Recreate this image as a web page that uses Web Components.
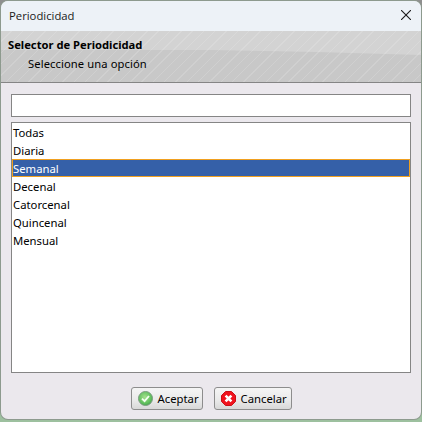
<!DOCTYPE html>
<html lang="es">
<head>
<meta charset="utf-8">
<title>Periodicidad</title>
<style>
  html, body { margin: 0; width: 422px; height: 422px; overflow: hidden; }
  body { background: linear-gradient(#8f8f8f 0, #8f8f8f 56px, #9dc09f 60px); font-family: "Noto Sans", Tahoma, sans-serif; }
</style>
</head>
<body>
<dialog-window>
  <title-bar slot="title">Periodicidad</title-bar>
  <dialog-header heading="Selector de Periodicidad" hint="Seleccione una opción"></dialog-header>
  <filter-input></filter-input>
  <option-list>
    <option-item>Todas</option-item>
    <option-item>Diaria</option-item>
    <option-item selected>Semanal</option-item>
    <option-item>Decenal</option-item>
    <option-item>Catorcenal</option-item>
    <option-item>Quincenal</option-item>
    <option-item>Mensual</option-item>
  </option-list>
  <button-bar>
    <dialog-button icon="ok" style="--w: 72px">Aceptar</dialog-button>
    <dialog-button icon="cancel" style="--w: 78px">Cancelar</dialog-button>
  </button-bar>
</dialog-window>

<script>
class DialogWindow extends HTMLElement {
  constructor() {
    super();
    this.attachShadow({ mode: 'open' }).innerHTML = `
      <style>
        :host {
          display: flex;
          flex-direction: column;
          box-sizing: border-box;
          width: 420px;
          height: 418px;
          margin: 1px 1px 0;
          background: #ebe8ed;
          border-radius: 7px;
          box-shadow: 0 0 0 1px #8d9a8e;
          overflow: hidden;
        }
      </style>
      <slot name="title"></slot>
      <slot></slot>
    `;
  }
}

class TitleBar extends HTMLElement {
  constructor() {
    super();
    this.attachShadow({ mode: 'open' }).innerHTML = `
      <style>
        :host {
          display: flex;
          align-items: center;
          justify-content: space-between;
          box-sizing: border-box;
          height: 30px;
          flex: none;
          padding: 0 10px 2px 8px;
          background: #edf2f7;
          font: 11.3px "Open Sans", "Noto Sans", sans-serif;
          color: #1a1a1a;
        }
        svg { display: block; }
      </style>
      <slot></slot>
      <svg width="10" height="10" viewBox="0 0 10 10" fill="none" stroke="#1a1a1a" stroke-width="1.1">
        <path d="M0 0 10 10M10 0 0 10"/>
      </svg>
    `;
  }
}

class DialogHeader extends HTMLElement {
  constructor() {
    super();
    this.attachShadow({ mode: 'open' }).innerHTML = `
      <style>
        :host {
          display: flex;
          flex-direction: column;
          position: relative;
          box-sizing: border-box;
          height: 52px;
          flex: none;
          padding: 6px 7px 0;
          background:
            repeating-linear-gradient(135deg, rgba(255,255,255,0) 0 7px, rgba(255,255,255,.14) 7px 8px),
            #d3d3d3;
          border-bottom: 1px solid #858585;
          font: 11.2px/16px "Noto Sans", sans-serif;
          color: #000;
        }
        :host::before {
          content: "";
          position: absolute;
          inset: 0;
          background:
            repeating-linear-gradient(135deg, rgba(255,255,255,0) 0 7px, rgba(255,255,255,.14) 7px 8px),
            #c8c8c8;
          clip-path: polygon(0 19px, 50% 19px, 75% 21px, 100% 24px, 100% 100%, 0 100%);
        }
        b, span { position: relative; white-space: nowrap; }
        span { margin: 3px 0 0 20px; letter-spacing: .1px; }
      </style>
      <b></b>
      <span></span>
    `;
  }
  connectedCallback() {
    this.shadowRoot.querySelector('b').textContent = this.getAttribute('heading');
    this.shadowRoot.querySelector('span').textContent = this.getAttribute('hint');
  }
}

class FilterInput extends HTMLElement {
  constructor() {
    super();
    this.attachShadow({ mode: 'open' }).innerHTML = `
      <style>
        :host {
          display: block;
          flex: none;
          margin: 11px 10px 0;
        }
        input {
          display: block;
          box-sizing: border-box;
          width: 100%;
          height: 23px;
          margin: 0;
          padding: 0 3px;
          background: #fff;
          border: 1px solid #858585;
          border-radius: 0;
          outline: none;
        }
      </style>
      <input type="text">
    `;
  }
}

class OptionList extends HTMLElement {
  constructor() {
    super();
    this.attachShadow({ mode: 'open' }).innerHTML = `
      <style>
        :host {
          display: block;
          box-sizing: border-box;
          flex: none;
          height: 251px;
          margin: 5px 10px 0;
          background: #fff;
          border: 1px solid #858585;
        }
      </style>
      <slot></slot>
    `;
  }
}

class OptionItem extends HTMLElement {
  constructor() {
    super();
    this.attachShadow({ mode: 'open' }).innerHTML = `
      <style>
        :host {
          display: block;
          box-sizing: border-box;
          height: 18px;
          padding: 1px 1px 0;
          font: 11.3px/18px "Noto Sans", sans-serif;
          color: #000;
          white-space: nowrap;
        }
        :host([selected]) {
          background: #3560a8;
          color: #fff;
          line-height: 16px;
          border: 1px solid #f0a020;
          padding: 1px 0 0;
        }
      </style>
      <slot></slot>
    `;
  }
}

class ButtonBar extends HTMLElement {
  constructor() {
    super();
    this.attachShadow({ mode: 'open' }).innerHTML = `
      <style>
        :host {
          display: flex;
          justify-content: center;
          gap: 11px;
          margin-top: 14px;
        }
      </style>
      <slot></slot>
    `;
  }
}

const ICONS = {
  ok: `<svg width="15" height="15" viewBox="0 0 15 15">
    <defs><radialGradient id="g" cx=".45" cy=".4" r=".65">
      <stop offset="0" stop-color="#a5e08e"/><stop offset=".7" stop-color="#5fbf5c"/><stop offset="1" stop-color="#3f9a4a"/>
    </radialGradient></defs>
    <circle cx="7.5" cy="7.5" r="7" fill="url(#g)" stroke="#7c9c80"/>
    <path d="M4 7.6 6.6 10.2 11 5" fill="none" stroke="#f4fff0" stroke-width="1.9"/>
  </svg>`,
  cancel: `<svg width="15" height="15" viewBox="0 0 15 15">
    <path d="M4.5.5h6l4 4v6l-4 4h-6l-4-4v-6z" fill="#f0141e" stroke="#c81018"/>
    <path d="M4.6 4.6 10.4 10.4M10.4 4.6 4.6 10.4" fill="none" stroke="#fff" stroke-width="2.6"/>
  </svg>`
};

class DialogButton extends HTMLElement {
  constructor() {
    super();
    this.attachShadow({ mode: 'open' }).innerHTML = `
      <style>
        :host {
          display: flex;
          align-items: center;
          gap: 5px;
          box-sizing: border-box;
          width: var(--w);
          height: 23px;
          padding: 0 0 0 6px;
          background: linear-gradient(#f5f5f5, #e9e9e9 60%, #d8d8d8);
          border: 1px solid #8d8d8d;
          border-radius: 3px;
          font: 11.3px "Noto Sans", sans-serif;
          color: #000;
          white-space: nowrap;
        }
        #icon, svg { display: block; flex: none; }
      </style>
      <span id="icon"></span>
      <slot></slot>
    `;
  }
  connectedCallback() {
    this.shadowRoot.getElementById('icon').innerHTML = ICONS[this.getAttribute('icon')];
  }
}

customElements.define('dialog-window', DialogWindow);
customElements.define('title-bar', TitleBar);
customElements.define('dialog-header', DialogHeader);
customElements.define('filter-input', FilterInput);
customElements.define('option-list', OptionList);
customElements.define('option-item', OptionItem);
customElements.define('button-bar', ButtonBar);
customElements.define('dialog-button', DialogButton);
</script>
</body>
</html>
